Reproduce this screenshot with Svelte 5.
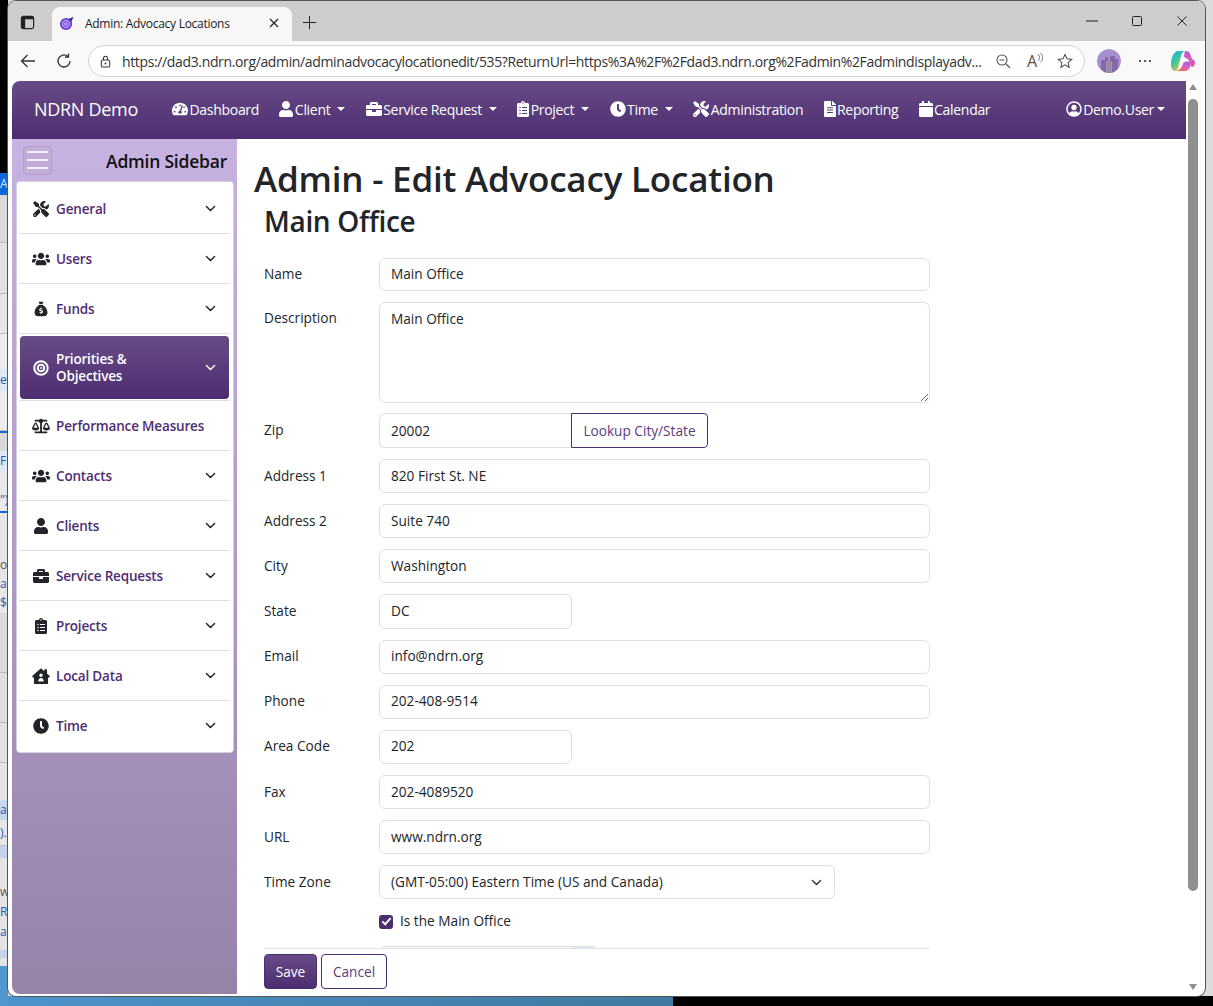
<script lang="ts">
	const strip = [
		{ h: 173, bg: '#000', text: '', color: '' },
		{ h: 22, bg: '#1167d8', text: 'Au', color: '#d7e6ff' },
		{ h: 48, bg: '#d9d9d9', text: '', color: '', line: true },
		{ h: 51, bg: '#e2e2e2', text: '', color: '', line: true },
		{ h: 40, bg: '#e6e6e6', text: '', color: '', line: true },
		{ h: 35, bg: '#ececec', text: '', color: '' },
		{ h: 22, bg: '#dde8f6', text: 'e(', color: '#1a5fc0' },
		{ h: 40, bg: '#ececec', text: '', color: '', line: true },
		{ h: 2, bg: '#1167d8', text: '', color: '' },
		{ h: 18, bg: '#d8d8d8', text: '', color: '' },
		{ h: 20, bg: '#dde8f6', text: 'Fi', color: '#1a5fc0' },
		{ h: 17, bg: '#e8e8e8', text: '', color: '' },
		{ h: 23, bg: '#e8e8e8', text: '")', color: '#1a5fc0' },
		{ h: 2, bg: '#1167d8', text: '', color: '' },
		{ h: 42, bg: '#e6e6e6', text: '', color: '' },
		{ h: 20, bg: '#e6e6e6', text: 'ou', color: '#555' },
		{ h: 18, bg: '#e6e6e6', text: 'al', color: '#1a5fc0' },
		{ h: 20, bg: '#e6e6e6', text: '${', color: '#1a5fc0' },
		{ h: 60, bg: '#dcdcdc', text: '', color: '', line: true },
		{ h: 50, bg: '#dedede', text: '', color: '', line: true },
		{ h: 40, bg: '#e0e0e0', text: '', color: '', line: true },
		{ h: 37, bg: '#e4e4e4', text: '', color: '' },
		{ h: 20, bg: '#c9d7ea', text: 'an', color: '#1a5fc0' },
		{ h: 26, bg: '#e6e6e6', text: ').', color: '#1a5fc0', line: true },
		{ h: 12, bg: '#c4d3e8', text: '', color: '' },
		{ h: 24, bg: '#e4e4e4', text: '', color: '' },
		{ h: 20, bg: '#e4e4e4', text: 'w', color: '#555' },
		{ h: 20, bg: '#e4e4e4', text: 'R', color: '#1a5fc0' },
		{ h: 20, bg: '#e4e4e4', text: 'ar', color: '#1a5fc0' },
		{ h: 8, bg: '#e4e4e4', text: '', color: '' },
		{ h: 8, bg: '#c4d3e8', text: '', color: '' },
		{ h: 8, bg: '#e4e4e4', text: '', color: '' },
		{ h: 40, bg: '#4f97d0', text: '', color: '' }
	];

	const icons: Record<string, { box: string; d: string }> = {
		user: { box: '0 0 448 512', d: 'M224 256c70.700 0 128-57.300 128-128S294.700 0 224 0 96 57.300 96 128s57.300 128 128 128zm89.600 32h-16.700c-22.200 10.200-46.900 16-72.900 16s-50.600-5.800-72.900-16h-16.700C60.200 288 0 348.200 0 422.400V464c0 26.500 21.500 48 48 48h352c26.500 0 48-21.500 48-48v-41.600c0-74.200-60.200-134.400-134.400-134.400z' },
		clock: { box: '0 0 512 512', d: 'M256,8C119,8,8,119,8,256S119,504,256,504,504,393,504,256,393,8,256,8Zm92.490,313h0l-20,25a16,16,0,0,1-22.490,2.500h0l-67-49.720a40,40,0,0,1-15-31.230V112a16,16,0,0,1,16-16h32a16,16,0,0,1,16,16V256l58,42.500A16,16,0,0,1,348.490,321Z' },
		briefcase: { box: '0 0 512 512', d: 'M320 336c0 8.840-7.160 16-16 16h-96c-8.840 0-16-7.160-16-16v-48H0v144c0 25.600 22.400 48 48 48h416c25.600 0 48-22.400 48-48V288H320v48zm144-208h-80V80c0-25.600-22.400-48-48-48H176c-25.600 0-48 22.400-48 48v48H48c-25.600 0-48 22.400-48 48v80h512v-80c0-25.600-22.400-48-48-48zm-144 0H192V96h128v32z' },
		calendar: { box: '0 0 448 512', d: 'M12 192h424c6.600 0 12 5.400 12 12v260c0 26.500-21.500 48-48 48H48c-26.500 0-48-21.500-48-48V204c0-6.600 5.400-12 12-12zm436-44v-36c0-26.500-21.500-48-48-48h-48V12c0-6.600-5.400-12-12-12h-40c-6.600 0-12 5.400-12 12v52H160V12c0-6.600-5.400-12-12-12h-40c-6.600 0-12 5.400-12 12v52H48C21.500 64 0 85.500 0 112v36c0 6.600 5.400 12 12 12h424c6.600 0 12-5.400 12-12z' },
		users: { box: '0 0 640 512', d: 'M96 224c35.300 0 64-28.700 64-64s-28.700-64-64-64-64 28.700-64 64 28.700 64 64 64zm448 0c35.300 0 64-28.700 64-64s-28.700-64-64-64-64 28.700-64 64 28.700 64 64 64zm32 32h-64c-17.600 0-33.500 7.100-45.100 18.600 40.300 22.100 68.900 62 75.100 109.400h66c17.700 0 32-14.300 32-32v-32c0-35.300-28.700-64-64-64zm-256 0c61.900 0 112-50.100 112-112S381.900 32 320 32 208 82.100 208 144s50.100 112 112 112zm76.800 32h-8.300c-20.800 10-43.900 16-68.500 16s-47.600-6-68.500-16h-8.300C179.600 288 128 339.600 128 403.200V432c0 26.500 21.500 48 48 48h288c26.500 0 48-21.500 48-48v-28.800c0-63.600-51.600-115.200-115.200-115.200zm-223.700-13.400C161.500 263.100 145.600 256 128 256H64c-35.300 0-64 28.700-64 64v32c0 17.700 14.300 32 32 32h65.900c6.300-47.400 34.900-87.300 75.200-109.400z' },
		tools: { box: '0 0 512 512', d: 'M501.100 395.700L384 278.600c-23.100-23.100-57.600-27.600-85.400-13.900L192 158.100V96L64 0 0 64l96 128h62.100l106.600 106.600c-13.600 27.800-9.200 62.300 13.900 85.400l117.100 117.100c14.600 14.600 38.200 14.600 52.700 0l52.700-52.700c14.500-14.600 14.500-38.200 0-52.700zM331.700 225c28.300 0 54.900 11 74.900 31l19.400 19.400c15.800-6.900 30.800-16.500 43.800-29.500 37.100-37.100 49.700-89.300 37.900-136.700-2.200-9-13.500-12.100-20.100-5.500l-74.400 74.400-67.900-11.300L334 98.900l74.400-74.400c6.600-6.600 3.400-17.900-5.700-20.200-47.400-11.700-99.600.9-136.600 37.900-28.500 28.500-41.900 66.100-41.200 103.600l82.100 82.100c8.100-1.900 16.500-2.900 24.700-2.900zm-103.900 82l-56.700-56.700L18.700 402.800c-25 25-25 65.500 0 90.500s65.500 25 90.500 0l123.600-123.600c-7.600-19.900-9.900-41.600-5-62.700zM64 472c-13.200 0-24-10.800-24-24 0-13.300 10.700-24 24-24s24 10.700 24 24c0 13.200-10.700 24-24 24z' },
		dashboard: { box: '0 0 576 512', d: 'M288 32C128.940 32 0 160.940 0 320c0 52.800 14.250 102.260 39.060 144.800 5.610 9.620 16.300 15.200 27.440 15.200h443c11.140 0 21.830-5.580 27.440-15.200C561.750 422.260 576 372.800 576 320c0-159.060-128.940-288-288-288zm0 64c14.710 0 26.580 10.130 30.320 23.650-1.110 2.260-2.640 4.230-3.450 6.670l-9.220 27.670c-5.130 3.490-10.970 6.010-17.640 6.010-17.670 0-32-14.330-32-32S270.330 96 288 96zM96 384c-17.670 0-32-14.330-32-32s14.330-32 32-32 32 14.330 32 32-14.330 32-32 32zm48-160c-17.670 0-32-14.330-32-32s14.330-32 32-32 32 14.330 32 32-14.330 32-32 32zm246.770-72.410l-61.330 184C343.130 347.330 352 364.540 352 384c0 11.720-3.380 22.550-8.880 32H232.880c-5.500-9.450-8.880-20.280-8.880-32 0-33.940 26.500-61.430 59.900-63.590l61.340-184.010c4.170-12.560 17.730-19.450 30.360-15.170 12.570 4.190 19.350 17.770 15.170 30.360zm14.660 57.200l15.520-46.550c3.470-1.290 7.130-2.230 11.050-2.230 17.670 0 32 14.330 32 32s-14.330 32-32 32c-11.380-.01-20.890-6.280-26.570-15.220zM480 384c-17.670 0-32-14.330-32-32s14.330-32 32-32 32 14.330 32 32-14.330 32-32 32z' },
		clipboard: { box: '0 0 384 512', d: 'M336 64h-80c0-35.300-28.700-64-64-64s-64 28.700-64 64H48C21.500 64 0 85.500 0 112v352c0 26.500 21.500 48 48 48h288c26.500 0 48-21.500 48-48V112c0-26.500-21.500-48-48-48zM96 424c-13.300 0-24-10.700-24-24s10.700-24 24-24 24 10.700 24 24-10.700 24-24 24zm0-96c-13.300 0-24-10.700-24-24s10.700-24 24-24 24 10.700 24 24-10.700 24-24 24zm0-96c-13.300 0-24-10.700-24-24s10.700-24 24-24 24 10.700 24 24-10.700 24-24 24zm96-192c13.300 0 24 10.700 24 24s-10.700 24-24 24-24-10.700-24-24 10.700-24 24-24zm128 368c0 4.400-3.600 8-8 8H168c-4.400 0-8-3.600-8-8v-16c0-4.400 3.600-8 8-8h144c4.400 0 8 3.600 8 8v16zm0-96c0 4.400-3.600 8-8 8H168c-4.400 0-8-3.600-8-8v-16c0-4.400 3.600-8 8-8h144c4.400 0 8 3.600 8 8v16zm0-96c0 4.400-3.600 8-8 8H168c-4.400 0-8-3.600-8-8v-16c0-4.400 3.600-8 8-8h144c4.400 0 8 3.600 8 8v16z' },
		file: { box: '0 0 384 512', d: 'M224 136V0H24C10.700 0 0 10.700 0 24v464c0 13.300 10.700 24 24 24h336c13.300 0 24-10.700 24-24V160H248c-13.200 0-24-10.800-24-24zM288 372c0 6.600-5.400 12-12 12H108c-6.600 0-12-5.400-12-12v-8c0-6.600 5.400-12 12-12h168c6.600 0 12 5.400 12 12zM288 292c0 6.600-5.400 12-12 12H108c-6.600 0-12-5.400-12-12v-8c0-6.600 5.400-12 12-12h168c6.600 0 12 5.400 12 12zM288 212v8c0 6.600-5.400 12-12 12H108c-6.600 0-12-5.400-12-12v-8c0-6.600 5.400-12 12-12h168c6.600 0 12 5.400 12 12zM384 121.900v6.100H256V0h6.100c6.400 0 12.500 2.500 17 7l97.900 98c4.500 4.500 7 10.600 7 16.900z' },
		bag: { box: '0 0 512 512', d: 'M176 24h160l-36 72H212zM204 120h104c84 48 156 150 156 248 0 66-44 120-116 120H164C92 488 48 434 48 368c0-98 72-200 156-248zM244 208v26c-28 4-46 22-46 46 0 26 18 38 46 46l24 6c12 4 16 8 16 14 0 8-8 14-24 14-14 0-28-4-40-12l-14 28c12 8 24 12 38 14v26h28v-26c30-4 48-22 48-48 0-26-16-38-46-46l-24-6c-12-4-16-6-16-12 0-8 8-12 22-12 12 0 24 4 34 10l14-28c-12-6-24-10-32-12v-28z' },
		target: { box: '0 0 512 512', d: 'M256 8a248 248 0 1 1 0 496a248 248 0 1 1 0-496zM256 72a184 184 0 1 0 0 368a184 184 0 1 0 0-368zM256 120a136 136 0 1 1 0 272a136 136 0 1 1 0-272zM256 184a72 72 0 1 0 0 144a72 72 0 1 0 0-144zM256 224a32 32 0 1 1 0 64a32 32 0 1 1 0-64z' },
		scale: { box: '0 0 640 512', d: 'M256 336h-.02c0-16.180 1.340-8.730-85.050-181.510-17.650-35.290-68.190-35.360-85.870 0C-2.060 328.750.02 320.330.02 336H0c0 44.180 57.310 80 128 80s128-35.820 128-80zM128 176l72 144H56l72-144zm511.980 160c0-16.180 1.340-8.730-85.050-181.510-17.650-35.290-68.190-35.360-85.870 0-87.120 174.260-85.040 165.840-85.040 181.510H384c0 44.180 57.310 80 128 80s128-35.820 128-80h-.02zM440 320l72-144 72 144H440zm88 128H352V153.250c23.510-10.290 41.160-31.480 46.390-57.250H528c8.840 0 16-7.160 16-16V48c0-8.840-7.160-16-16-16H383.640C369.040 12.680 346.090 0 320 0s-49.040 12.680-63.640 32H112c-8.840 0-16 7.160-16 16v32c0 8.840 7.160 16 16 16h129.610c5.230 25.760 22.870 46.960 46.390 57.250V448H112c-8.840 0-16 7.160-16 16v32c0 8.840 7.160 16 16 16h416c8.840 0 16-7.160 16-16v-32c0-8.840-7.160-16-16-16z' },
		house: { box: '0 0 576 512', d: 'M288 8L16 248c-12 10-14 24-6 34l16 18c8 10 20 10 30 2l6-6v184c0 18 14 32 32 32h388c18 0 32-14 32-32V296l6 6c10 8 22 8 30-2l16-18c8-10 6-24-6-34l-78-68V56c0-10-6-16-16-16h-56c-10 0-16 6-16 16v46zM288 176a56 56 0 1 1 0 112a56 56 0 1 1 0-112zM200 416c0-48 36-96 88-96s88 48 88 96c0 10-6 16-16 16H216c-10 0-16-6-16-16z' },
		usercircle: { box: '0 0 512 512', d: 'M256 8C119 8 8 119 8 256s111 248 248 248 248-111 248-248S393 8 256 8zM256 56c110 0 200 90 200 200 0 50-18 96-50 132-26-36-66-60-110-60-12 0-26 8-40 8s-28-8-40-8c-44 0-84 24-110 60-32-36-50-82-50-132C56 146 146 56 256 56zM256 120c-48 0-88 40-88 88s40 88 88 88 88-40 88-88-40-88-88-88z' }
	};

	const topNav = [
		{ icon: 'dashboard', label: 'Dashboard', caret: false },
		{ icon: 'user', label: 'Client', caret: true },
		{ icon: 'briefcase', label: 'Service Request', caret: true },
		{ icon: 'clipboard', label: 'Project', caret: true },
		{ icon: 'clock', label: 'Time', caret: true },
		{ icon: 'tools', label: 'Administration', caret: false },
		{ icon: 'file', label: 'Reporting', caret: false },
		{ icon: 'calendar', label: 'Calendar', caret: false }
	];

	const sideItems = [
		{ icon: 'tools', label: 'General', chevron: true },
		{ icon: 'users', label: 'Users', chevron: true },
		{ icon: 'bag', label: 'Funds', chevron: true },
		{ icon: 'target', label: 'Priorities & Objectives', chevron: true, active: true },
		{ icon: 'scale', label: 'Performance Measures', chevron: false },
		{ icon: 'users', label: 'Contacts', chevron: true },
		{ icon: 'user', label: 'Clients', chevron: true },
		{ icon: 'briefcase', label: 'Service Requests', chevron: true },
		{ icon: 'clipboard', label: 'Projects', chevron: true },
		{ icon: 'house', label: 'Local Data', chevron: true },
		{ icon: 'clock', label: 'Time', chevron: true }
	];

	const fieldsAfterZip = [
		{ label: 'Address 1', value: '820 First St. NE' },
		{ label: 'Address 2', value: 'Suite 740' },
		{ label: 'City', value: 'Washington' },
		{ label: 'State', value: 'DC', short: true },
		{ label: 'Email', value: 'info@ndrn.org' },
		{ label: 'Phone', value: '202-408-9514' },
		{ label: 'Area Code', value: '202', short: true },
		{ label: 'Fax', value: '202-4089520' },
		{ label: 'URL', value: 'www.ndrn.org' }
	];
</script>

{#snippet icon(name: string, cls: string)}
	<svg class={cls} viewBox={icons[name].box} aria-hidden="true"><path fill="currentColor" fill-rule="evenodd" d={icons[name].d} /></svg>
{/snippet}

<div class="desktop">
	<div class="strip">
		{#each strip as s}
			<div class="strip-part" class:line={s.line} style="height: {s.h}px; line-height: {s.h}px; background: {s.bg}; color: {s.color};">{s.text}</div>
		{/each}
	</div>

	<div class="window">
		<div class="tabstrip">
			<svg class="tab-toggle" viewBox="0 0 16 16"><rect x="1.500" y="1.500" width="13" height="13" rx="2" fill="none" stroke="#222" stroke-width="1.300" /><path d="M2 2h12v2.500H5.500V14H2z" fill="#222" /></svg>
			<div class="tab">
				<svg class="favicon" viewBox="0 0 16 16"><circle cx="7.500" cy="8.500" r="6.500" fill="#6d3fd6" /><path d="M10 3c2-.5 4-1.500 5-2.500-.2 2.500-1 4.500-2.500 6z" fill="#3a2a9c" /><circle cx="7.500" cy="8.500" r="3.800" fill="none" stroke="#d9ccff" stroke-width="1" /><circle cx="7.500" cy="8.500" r="1.500" fill="none" stroke="#d9ccff" stroke-width="1" /></svg>
				<span class="tab-title">Admin: Advocacy Locations</span>
				<svg class="tab-close" viewBox="0 0 10 10"><path d="M1 1l8 8M9 1l-8 8" stroke="#222" stroke-width="1.200" /></svg>
			</div>
			<svg class="new-tab" viewBox="0 0 16 16"><path d="M8 1v14M1 8h14" stroke="#222" stroke-width="1.100" /></svg>
			<div class="win-controls">
				<svg viewBox="0 0 12 12"><path d="M0 6h12" stroke="#222" stroke-width="1" /></svg>
				<svg viewBox="0 0 12 12"><rect x="1.500" y="1.500" width="9" height="9" rx="1" fill="none" stroke="#222" stroke-width="1" /></svg>
				<svg viewBox="0 0 12 12"><path d="M1.500 1.500l9 9M10.500 1.500l-9 9" stroke="#222" stroke-width="1" /></svg>
			</div>
		</div>

		<div class="toolbar">
			<svg class="tool-btn" viewBox="0 0 18 18"><path d="M16 9H2.500M8.500 3l-6 6 6 6" fill="none" stroke="#333" stroke-width="1.300" /></svg>
			<svg class="tool-btn reload" viewBox="0 0 18 18"><path d="M15 9a6 6 0 1 1-2-4.500M13.500 1.500v3.500H10" fill="none" stroke="#333" stroke-width="1.300" /></svg>
			<div class="address">
				<svg class="lock" viewBox="0 0 14 14"><rect x="2.500" y="5.500" width="9" height="7.500" rx="1.500" fill="none" stroke="#333" stroke-width="1.100" /><path d="M4.800 5.500V3.500a2.200 2.200 0 0 1 4.400 0v2" fill="none" stroke="#333" stroke-width="1.100" /><circle cx="7" cy="9.200" r="1" fill="#333" /></svg>
				<span class="url">https://dad3.ndrn.org/admin/adminadvocacylocationedit/535?ReturnUrl=https%3A%2F%2Fdad3.ndrn.org%2Fadmin%2Fadmindisplayadv...</span>
				<svg class="addr-icon" viewBox="0 0 16 16"><circle cx="7" cy="7" r="5" fill="none" stroke="#555" stroke-width="1.100" /><path d="M11 11l4 4M4.500 7h5" stroke="#555" stroke-width="1.100" /></svg>
				<span class="read-aloud">A<svg viewBox="0 0 6 10"><path d="M1 1c2 2 2 5 0 7M3.500 0c3 3 3 7 0 9" fill="none" stroke="#555" stroke-width=".8" /></svg></span>
				<svg class="addr-icon" viewBox="0 0 16 16"><path d="M8 1.500l2 4.300 4.700.6-3.500 3.200.9 4.700L8 11.900 3.900 14.300l.9-4.700L1.300 6.400 6 5.800z" fill="none" stroke="#555" stroke-width="1.100" /></svg>
			</div>
			<svg class="avatar" viewBox="0 0 24 24">
				<circle cx="12" cy="12" r="12" fill="#a88dcf" />
				<path d="M4 20V11h4V8h3v4h2V7h5v3h3v10l-4 4H8z" fill="#8468ab" />
				<path d="M9 24V12h6v12z" fill="#a793b4" />
				<path d="M10.500 12v12M12 12v12M13.500 12v12" stroke="#8a7796" stroke-width=".5" />
			</svg>
			<span class="dots"><i></i><i></i><i></i></span>
			<svg class="copilot" viewBox="0 0 24 22">
				<defs>
					<linearGradient id="cp-left" x1="0" y1="0" x2="0.600" y2="1">
						<stop offset="0" stop-color="#2aa4e8" />
						<stop offset="0.500" stop-color="#35c9a0" />
						<stop offset="1" stop-color="#f3c13a" />
					</linearGradient>
					<linearGradient id="cp-right" x1="0.900" y1="0" x2="0.300" y2="1">
						<stop offset="0" stop-color="#8b5be8" />
						<stop offset="0.550" stop-color="#d85ac0" />
						<stop offset="1" stop-color="#f2683c" />
					</linearGradient>
				</defs>
				<path d="M7 1h7c-2 .5-3 2-3.700 4L8 14c-.8 3-1.500 7-4 7-2.500 0-4-3-4-7 0-6 3-13 7-13z" fill="url(#cp-left)" />
				<path d="M4 21h10c3 0 4-2 5-4l1.500-4c-1-1-3-1.500-5-1.500-2.500 0-3.500 1-4.500 4-.8 2.500-3 5.500-7 5.500z" fill="url(#cp-right)" opacity=".95" />
				<path d="M14 1c3 0 4.500 1 5.300 3.500L21 9c1.800.5 3 2 3 4 0 2.500-1.500 4-3.500 4L18 11c-1-2.500-3-3-4.500-2.500L13 6c.5-2.500.5-4 1-5z" fill="url(#cp-right)" />
				<path d="M13.500 7c-1.500.5-2.500 2-3 4l-1 3.500c-.5 2-1.500 3.500-2.500 4.500 2 0 3.500-1.500 4.500-4l.8-2.500c.5-1.800 1.500-3 3.200-3.500-.8-1-1.500-1.800-2-2z" fill="#fff" opacity=".9" />
			</svg>
		</div>

		<div class="viewport">
			<div class="page">
				<nav class="topnav">
					<span class="brand">NDRN Demo</span>
					<div class="nav-links">
						{#each topNav as item}
							<span class="nav-link">
								{@render icon(item.icon, 'nav-icon')}{item.label}{#if item.caret}<i class="caret wide"></i>{/if}
							</span>
						{/each}
					</div>
					<span class="nav-link account">{@render icon('usercircle', 'nav-icon')}Demo.User<i class="caret"></i></span>
				</nav>

				<div class="body">
					<aside class="sidebar">
						<div class="side-head">
							<span class="burger"><i></i><i></i><i></i></span>
							<span class="side-title">Admin Sidebar</span>
						</div>
						<ul class="side-card">
							{#each sideItems as item}
								<li class="side-item" class:active={item.active}>
									<span class="side-inner">
										<span class="side-icon-box">{@render icon(item.icon, 'side-icon')}</span>
										<span class="side-label">{item.label}</span>
										{#if item.chevron}
											<svg class="chevron" viewBox="0 0 16 16"><path d="M3 5.500l5 5 5-5" fill="none" stroke="currentColor" stroke-width="1.800" stroke-linecap="round" stroke-linejoin="round" /></svg>
										{/if}
									</span>
								</li>
							{/each}
						</ul>
					</aside>

					<main class="main">
						<h1>Admin - Edit Advocacy Location</h1>
						<div class="editor">
							<h2>Main Office</h2>
							<div class="form">
								<div class="row">
									<label for="f-name">Name</label>
									<input id="f-name" class="control first" value="Main Office" />
								</div>
								<div class="row tall">
									<label for="f-desc">Description</label>
									<textarea id="f-desc" class="control">Main Office</textarea>
								</div>
								<div class="row">
									<label for="f-zip">Zip</label>
									<div class="group">
										<input id="f-zip" class="control zip" value="20002" />
										<button class="lookup">Lookup City/State</button>
									</div>
								</div>
								{#each fieldsAfterZip as f}
									<div class="row">
										<label for={f.label}>{f.label}</label>
										<input id={f.label} class="control" class:short={f.short} value={f.value} />
									</div>
								{/each}
								<div class="row">
									<label for="f-tz">Time Zone</label>
									<div class="select-wrap">
										<select id="f-tz" class="control">
											<option>(GMT-05:00) Eastern Time (US and Canada)</option>
										</select>
										<svg class="select-chevron" viewBox="0 0 16 16"><path d="M3 5.500l5 5 5-5" fill="none" stroke="#343a40" stroke-width="1.800" stroke-linecap="round" stroke-linejoin="round" /></svg>
									</div>
								</div>
								<div class="row check">
									<input id="f-main" type="checkbox" checked />
									<label for="f-main">Is the Main Office</label>
								</div>
								<div class="row clipped">
									<span></span>
									<div class="next-group"><span class="next-addon"></span></div>
								</div>
							</div>
							<div class="actions">
								<button class="btn save">Save</button>
								<button class="btn cancel">Cancel</button>
							</div>
						</div>
					</main>
				</div>
			</div>

			<div class="scrollbar">
				<i class="arrow up"></i>
				<div class="thumb-track"><div class="thumb"></div></div>
				<i class="arrow down"></i>
			</div>
		</div>
	</div>
	<div class="right-edge"></div>
	<div class="taskbar"><span class="task-blue"></span><span class="task-black"></span></div>
</div>

<style>
	:global(body) {
		margin: 0;
		background: #000;
	}

	.desktop {
		position: relative;
		display: flex;
		width: 1213px;
		height: 1006px;
		overflow: hidden;
		background: #d8d8d8;
		font-family: 'Open Sans', 'Noto Sans', sans-serif;
	}

	.strip {
		display: flex;
		flex-direction: column;
		width: 8px;
		flex: none;
		overflow: hidden;
		font-size: 12px;
	}

	.strip-part {
		flex: none;
		box-sizing: border-box;
		white-space: nowrap;
		overflow: hidden;
	}

	.strip-part.line {
		border-bottom: 1px solid #bdbdbd;
	}

	.window {
		position: relative;
		z-index: 1;
		display: flex;
		flex-direction: column;
		width: 1197px;
		height: 995px;
		margin-top: 1px;
		flex: none;
		box-sizing: border-box;
		background: #fff;
		border-radius: 8px;
		box-shadow: 0 0 0 1px #555;
		overflow: hidden;
		padding-bottom: 2px;
	}

	.right-edge {
		flex: 1;
		background: #dcdcdc;
	}

	.taskbar {
		position: absolute;
		left: 8px;
		right: 0;
		bottom: 0;
		height: 10px;
		display: flex;
	}

	.task-blue {
		width: 665px;
		background: linear-gradient(90deg, #4c93cc, #41799f);
	}

	.task-black {
		flex: 1;
		background: #000;
	}

	/* browser chrome */
	.tabstrip {
		display: flex;
		align-items: flex-end;
		height: 40px;
		flex: none;
		background: #cdcdcd;
		padding-left: 12px;
	}

	.tab-toggle {
		width: 15px;
		height: 15px;
		margin: 0 17px 11px 0;
	}

	.tab {
		display: flex;
		align-items: center;
		width: 240px;
		height: 34px;
		box-sizing: border-box;
		padding: 0 13px 2px 7px;
		background: #f7f7f7;
		border-radius: 8px 8px 0 0;
	}

	.favicon {
		width: 15px;
		height: 15px;
		margin-right: 11px;
	}

	.tab-title {
		flex: 1;
		font-size: 12px;
		color: #222;
		letter-spacing: -0.28px;
		white-space: nowrap;
	}

	.tab-close {
		width: 10px;
		height: 10px;
	}

	.new-tab {
		width: 15px;
		height: 15px;
		margin: 0 0 11px 10px;
	}

	.win-controls {
		display: flex;
		gap: 33px;
		margin: 0 17px 14px auto;
	}

	.win-controls svg {
		width: 12px;
		height: 12px;
	}

	.toolbar {
		display: flex;
		align-items: center;
		height: 40px;
		flex: none;
		background: #f9f9f9;
		padding-left: 11px;
	}

	.tool-btn {
		width: 18px;
		height: 18px;
		margin-right: 18px;
	}

	.reload {
		margin-right: 15px;
	}

	.address {
		display: flex;
		align-items: center;
		width: 997px;
		height: 32px;
		box-sizing: border-box;
		padding: 0 11px 0 10px;
		background: #fff;
		border: 1px solid #d2d2d2;
		border-radius: 16px;
	}

	.lock {
		width: 13px;
		height: 13px;
		margin-right: 10px;
	}

	.url {
		flex: 1;
		font-size: 14px;
		color: #333;
		white-space: nowrap;
		overflow: hidden;
		letter-spacing: -0.36px;
	}

	.addr-icon {
		width: 16px;
		height: 16px;
		margin-left: 12px;
		flex: none;
	}

	.read-aloud {
		display: inline-flex;
		width: 18px;
		margin-left: 16px;
		font-size: 16px;
		line-height: 16px;
		color: #555;
		flex: none;
	}

	.read-aloud svg {
		width: 6px;
		height: 10px;
	}

	.avatar {
		width: 24px;
		height: 24px;
		margin-left: 12px;
		flex: none;
		border-radius: 50%;
	}

	.dots {
		display: flex;
		gap: 3px;
		margin-left: 18px;
		flex: none;
	}

	.dots i {
		width: 2px;
		height: 2px;
		background: #222;
		border-radius: 50%;
	}

	.copilot {
		width: 24px;
		height: 22px;
		margin-left: 20px;
		flex: none;
	}

	/* page */
	.viewport {
		display: flex;
		flex: 1;
		min-height: 0;
		padding-left: 4px;
	}

	.page {
		display: flex;
		flex-direction: column;
		width: 1174px;
		flex: none;
	}

	.topnav {
		display: flex;
		align-items: center;
		height: 58px;
		flex: none;
		box-sizing: border-box;
		padding: 0 21px 2px 22px;
		background: linear-gradient(180deg, #674b85, #4d2d71);
		border-radius: 8px 0 0 0;
		color: #fff;
	}

	.brand {
		width: 138px;
		font-size: 18px;
		letter-spacing: -0.3px;
	}

	.nav-links {
		display: flex;
		gap: 20.300px;
	}

	.nav-link {
		display: inline-flex;
		align-items: center;
		font-size: 14px;
		letter-spacing: -0.3px;
		white-space: nowrap;
	}

	.nav-icon {
		height: 16px;
		width: auto;
		max-width: 16px;
		margin-right: 1.500px;
		flex: none;
	}

	.caret {
		width: 0;
		height: 0;
		margin-left: 3px;
		border-left: 4px solid transparent;
		border-right: 4px solid transparent;
		border-top: 4px solid #fff;
	}

	.caret.wide {
		margin-left: 7px;
	}

	.account {
		margin-left: auto;
	}

	.body {
		display: flex;
		flex: 1;
		min-height: 0;
	}

	.sidebar {
		display: flex;
		flex-direction: column;
		width: 225px;
		flex: none;
		background: linear-gradient(180deg, #c7b2e1, #9683a8);
		border-radius: 0 0 0 8px;
	}

	.side-head {
		display: flex;
		align-items: center;
		justify-content: space-between;
		height: 42px;
		flex: none;
		box-sizing: border-box;
		padding: 0 10px 0 11px;
	}

	.burger {
		display: flex;
		flex-direction: column;
		justify-content: center;
		gap: 6px;
		width: 29px;
		height: 29px;
		box-sizing: border-box;
		padding: 0 3px;
		border: 1px solid #b29dcd;
		border-radius: 4px;
		background: #c2add9;
	}

	.burger i {
		height: 2px;
		background: #f4eefb;
	}

	.side-title {
		padding-top: 1px;
		font-size: 17.500px;
		font-weight: 600;
		color: #111;
		letter-spacing: -0.22px;
	}

	.side-card {
		list-style: none;
		width: 218px;
		margin: 0 0 0 4px;
		padding: 2px 3px 2px 2px;
		box-sizing: border-box;
		background: #fff;
		border: 1px solid #d8d2e0;
		border-radius: 4px;
	}

	.side-item {
		height: 50px;
		border-bottom: 1px solid #dedee3;
		box-sizing: border-box;
	}

	.side-item:last-child {
		border-bottom: 0;
		height: 49px;
	}

	.side-item.active {
		height: 67px;
		padding: 2px 1px 1px;
	}

	.side-inner {
		display: flex;
		align-items: center;
		height: 100%;
		padding: 0 13px;
		box-sizing: border-box;
		color: #4f2d73;
		font-size: 13.500px;
		font-weight: 600;
		letter-spacing: -0.17px;
	}

	.active .side-inner {
		padding: 0 12px;
		background: linear-gradient(180deg, #674b85, #4d2d71);
		border-radius: 4px;
		color: #fff;
		line-height: 17px;
	}

	.side-icon-box {
		display: flex;
		justify-content: center;
		width: 18px;
		flex: none;
		margin-right: 6px;
		color: #212529;
	}

	.side-icon {
		height: 16px;
		width: auto;
		max-width: 18px;
		flex: none;
	}

	.active .side-icon-box {
		color: #fff;
	}

	.side-label {
		flex: 1;
	}

	.active .side-label {
		padding-right: 24px;
	}

	.chevron {
		width: 13px;
		height: 13px;
		color: #212529;
		flex: none;
	}

	.active .chevron {
		color: #fff;
	}

	.main {
		display: flex;
		flex-direction: column;
		flex: 1;
		min-width: 0;
		padding-left: 17px;
	}

	h1 {
		margin: 16px 0 0;
		font-size: 35px;
		font-weight: 600;
		line-height: 47px;
		color: #212529;
		letter-spacing: -0.21px;
	}

	.editor {
		display: flex;
		flex-direction: column;
		flex: 1;
		min-height: 0;
		width: 666px;
		margin-left: 10px;
	}

	h2 {
		margin: 0 0 18px;
		font-size: 28px;
		font-weight: 600;
		line-height: 38px;
		color: #212529;
		letter-spacing: -0.33px;
	}

	.form {
		flex: 1;
		min-height: 0;
		overflow: hidden;
		border-bottom: 1px solid #dee2e6;
	}

	.row {
		display: grid;
		grid-template-columns: 115px 1fr;
		align-items: center;
		margin-bottom: 11px;
		font-size: 13.650px;
		color: #212529;
	}

	.row label {
		padding-bottom: 2px;
	}

	.row.tall {
		align-items: start;
		margin-bottom: 10px;
	}

	.row.tall label {
		padding-top: 6px;
	}

	.control {
		width: 100%;
		height: 34.150px;
		box-sizing: border-box;
		padding: 0 11px 2px;
		border: 1px solid #dcdfe4;
		border-radius: 6px;
		background: #fff;
		font: inherit;
		color: #212529;
		outline: none;
	}

	.control.first {
		height: 33px;
		padding-bottom: 3px;
	}

	textarea.control {
		display: block;
		height: 101px;
		padding-top: 6px;
	}

	.control.short {
		width: 193px;
	}

	.group {
		display: flex;
	}

	.control.zip {
		width: 192px;
		height: 35px;
		padding-bottom: 0;
		border-radius: 6px 0 0 6px;
		border-right: 0;
	}

	.lookup {
		height: 35px;
		width: 137px;
		padding: 0;
		background: #fff;
		border: 1px solid #4d2d71;
		border-radius: 0 4px 4px 0;
		font: inherit;
		color: #5b3b80;
	}

	.select-wrap {
		position: relative;
		width: 456px;
	}

	select.control {
		appearance: none;
		display: block;
	}

	.select-chevron {
		position: absolute;
		right: 12px;
		top: 11px;
		width: 13px;
		height: 13px;
		pointer-events: none;
	}

	.row.check {
		grid-template-columns: 14px 1fr;
		column-gap: 7px;
		margin: 12px 0 14px 115px;
	}

	.row.check input {
		appearance: none;
		position: relative;
		width: 14px;
		height: 14px;
		margin: 0;
		background: #4d2d71;
		border-radius: 3px;
	}

	.row.check input::after {
		content: '';
		position: absolute;
		left: 4.500px;
		top: 1.500px;
		width: 3px;
		height: 7px;
		border: solid #fff;
		border-width: 0 2px 2px 0;
		transform: rotate(42deg);
	}

	.row.clipped {
		margin: 0;
	}

	.next-group {
		display: flex;
		justify-content: flex-end;
		width: 219px;
		height: 34px;
		box-sizing: border-box;
		border: 1px solid #dcdfe4;
		border-radius: 6px;
		overflow: hidden;
	}

	.next-addon {
		width: 27px;
		background: #e9ecef;
	}

	.actions {
		display: flex;
		gap: 4px;
		height: 45px;
		flex: none;
		box-sizing: border-box;
		padding-top: 5px;
	}

	.btn {
		height: 35px;
		padding: 0;
		font: 13.650px 'Open Sans', 'Noto Sans', sans-serif;
		border-radius: 4px;
	}

	.save {
		width: 53px;
		color: #fff;
		border: 1px solid #4d2d71;
		background: linear-gradient(180deg, #674b85, #4d2d71);
	}

	.cancel {
		width: 66px;
		color: #5b3b80;
		background: #fff;
		border: 1px solid #4d2d71;
	}

	/* scrollbar */
	.scrollbar {
		display: flex;
		flex-direction: column;
		align-items: center;
		width: 14px;
		flex: none;
		padding: 3px 0 4px;
		box-sizing: border-box;
	}

	.thumb-track {
		flex: 1;
		width: 10px;
		padding: 9px 0 93px;
		box-sizing: border-box;
	}

	.thumb {
		height: 100%;
		background: #8f8f8f;
		border-radius: 5px;
	}

	.arrow {
		width: 0;
		height: 0;
		border-left: 4px solid transparent;
		border-right: 4px solid transparent;
	}

	.arrow.up {
		border-bottom: 6px solid #8f8f8f;
	}

	.arrow.down {
		border-top: 6px solid #8f8f8f;
	}
</style>
